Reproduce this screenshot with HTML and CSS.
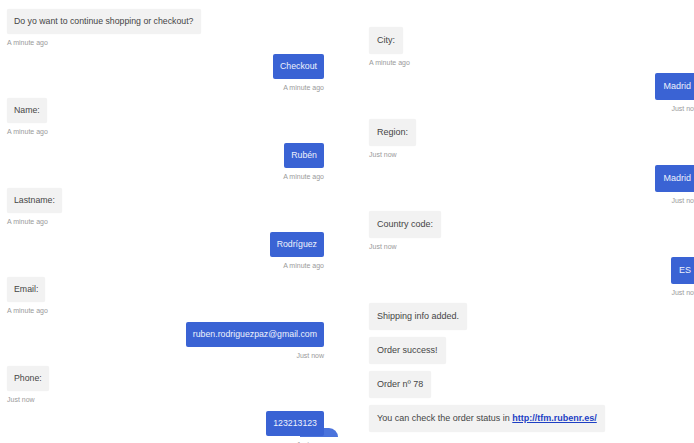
FILE: index.html
```html
<!DOCTYPE html>
<html lang="en">

<head>
    <meta charset="UTF-8">
    <meta name="viewport" content="width=device-width, initial-scale=1.0">
    <title>Shop bot - Checkout</title>
    <link rel="stylesheet" href="styles.css">
</head>

<body>
    <div class="screen">
        <!-- customer data -->
        <section class="chat chat-left">
            <div class="msg bot">
                <div class="bubble">Do yo want to continue shopping or checkout?</div>
                <div class="time">A minute ago</div>
            </div>
            <div class="msg user">
                <div class="bubble">Checkout</div>
                <div class="time">A minute ago</div>
            </div>
            <div class="msg bot">
                <div class="bubble">Name:</div>
                <div class="time">A minute ago</div>
            </div>
            <div class="msg user">
                <div class="bubble">Rubén</div>
                <div class="time">A minute ago</div>
            </div>
            <div class="msg bot">
                <div class="bubble">Lastname:</div>
                <div class="time">A minute ago</div>
            </div>
            <div class="msg user">
                <div class="bubble">Rodríguez</div>
                <div class="time">A minute ago</div>
            </div>
            <div class="msg bot">
                <div class="bubble">Email:</div>
                <div class="time">A minute ago</div>
            </div>
            <div class="msg user">
                <div class="bubble">ruben.rodriguezpaz@gmail.com</div>
                <div class="time">Just now</div>
            </div>
            <div class="msg bot">
                <div class="bubble">Phone:</div>
                <div class="time">Just now</div>
            </div>
            <div class="msg user">
                <div class="bubble">123213123</div>
                <div class="time">Just now</div>
            </div>
            <button class="launcher" aria-label="Open chat"></button>
        </section>

        <!-- shipping data -->
        <section class="chat chat-right">
            <div class="msg bot">
                <div class="bubble">City:</div>
                <div class="time">A minute ago</div>
            </div>
            <div class="msg user">
                <div class="bubble">Madrid</div>
                <div class="time">Just now</div>
            </div>
            <div class="msg bot">
                <div class="bubble">Region:</div>
                <div class="time">Just now</div>
            </div>
            <div class="msg user">
                <div class="bubble">Madrid</div>
                <div class="time">Just now</div>
            </div>
            <div class="msg bot">
                <div class="bubble">Country code:</div>
                <div class="time">Just now</div>
            </div>
            <div class="msg user">
                <div class="bubble">ES</div>
                <div class="time">Just now</div>
            </div>
            <div class="msg bot no-time">
                <div class="bubble">Shipping info added.</div>
            </div>
            <div class="msg bot no-time">
                <div class="bubble">Order success!</div>
            </div>
            <div class="msg bot no-time">
                <div class="bubble">Order nº 78</div>
            </div>
            <div class="msg bot no-time">
                <div class="bubble">You can check the order status in <a href="http://tfm.rubenr.es/">http://tfm.rubenr.es/</a></div>
            </div>
        </section>
    </div>
</body>

</html>
```

FILE: styles.css
```css
* {
    margin: 0;
    padding: 0;
    box-sizing: border-box;
    font-family: 'Liberation Sans', Arial, sans-serif;
}

html {
    background: #fff;
}

body {
    overflow: hidden;
}

.screen {
    display: flex;
    gap: 31px;
    width: 720px;
    height: 443px;
}

.chat {
    display: flex;
    flex-direction: column;
    padding: 0 7px;
    flex-shrink: 0;
}

.chat-left {
    position: relative;
    width: 331px;
    padding-top: 9px;
}

.chat-right {
    width: 344px;
    padding-top: 27px;
}

.msg {
    display: flex;
    flex-direction: column;
    align-items: flex-start;
}

.msg.user {
    align-items: flex-end;
}

.bubble {
    font-size: 9px;
    line-height: 11px;
    color: #454545;
    background: #f2f2f2;
    border-radius: 2px;
    box-shadow: 0 0 1px rgba(0, 0, 0, 0.08);
    white-space: nowrap;
}

.user .bubble {
    background: #3a63d4;
    color: #eef2fc;
    box-shadow: none;
}

.bubble a {
    color: #1d3fc4;
    font-weight: bold;
    text-decoration: underline;
}

.time {
    font-size: 7px;
    line-height: 9px;
    color: #9a9a9a;
    margin-top: 4px;
    white-space: nowrap;
}

.chat-left .bubble {
    font-size: 8.75px;
    padding: 7px 7px;
}

.chat-left .msg {
    margin-bottom: 6.67px;
}

.chat-right .bubble {
    padding: 8px 8px;
}

.chat-right .msg {
    margin-bottom: 6px;
}

.chat-right .msg.no-time {
    margin-bottom: 7px;
}

/* floating chat button, mostly below the fold */
.launcher {
    position: absolute;
    left: 300px;
    top: 428px;
    width: 38px;
    height: 9px;
    border: none;
    border-radius: 0 9px 0 0;
    background: #4b73dc;
    z-index: -1;
}
```
